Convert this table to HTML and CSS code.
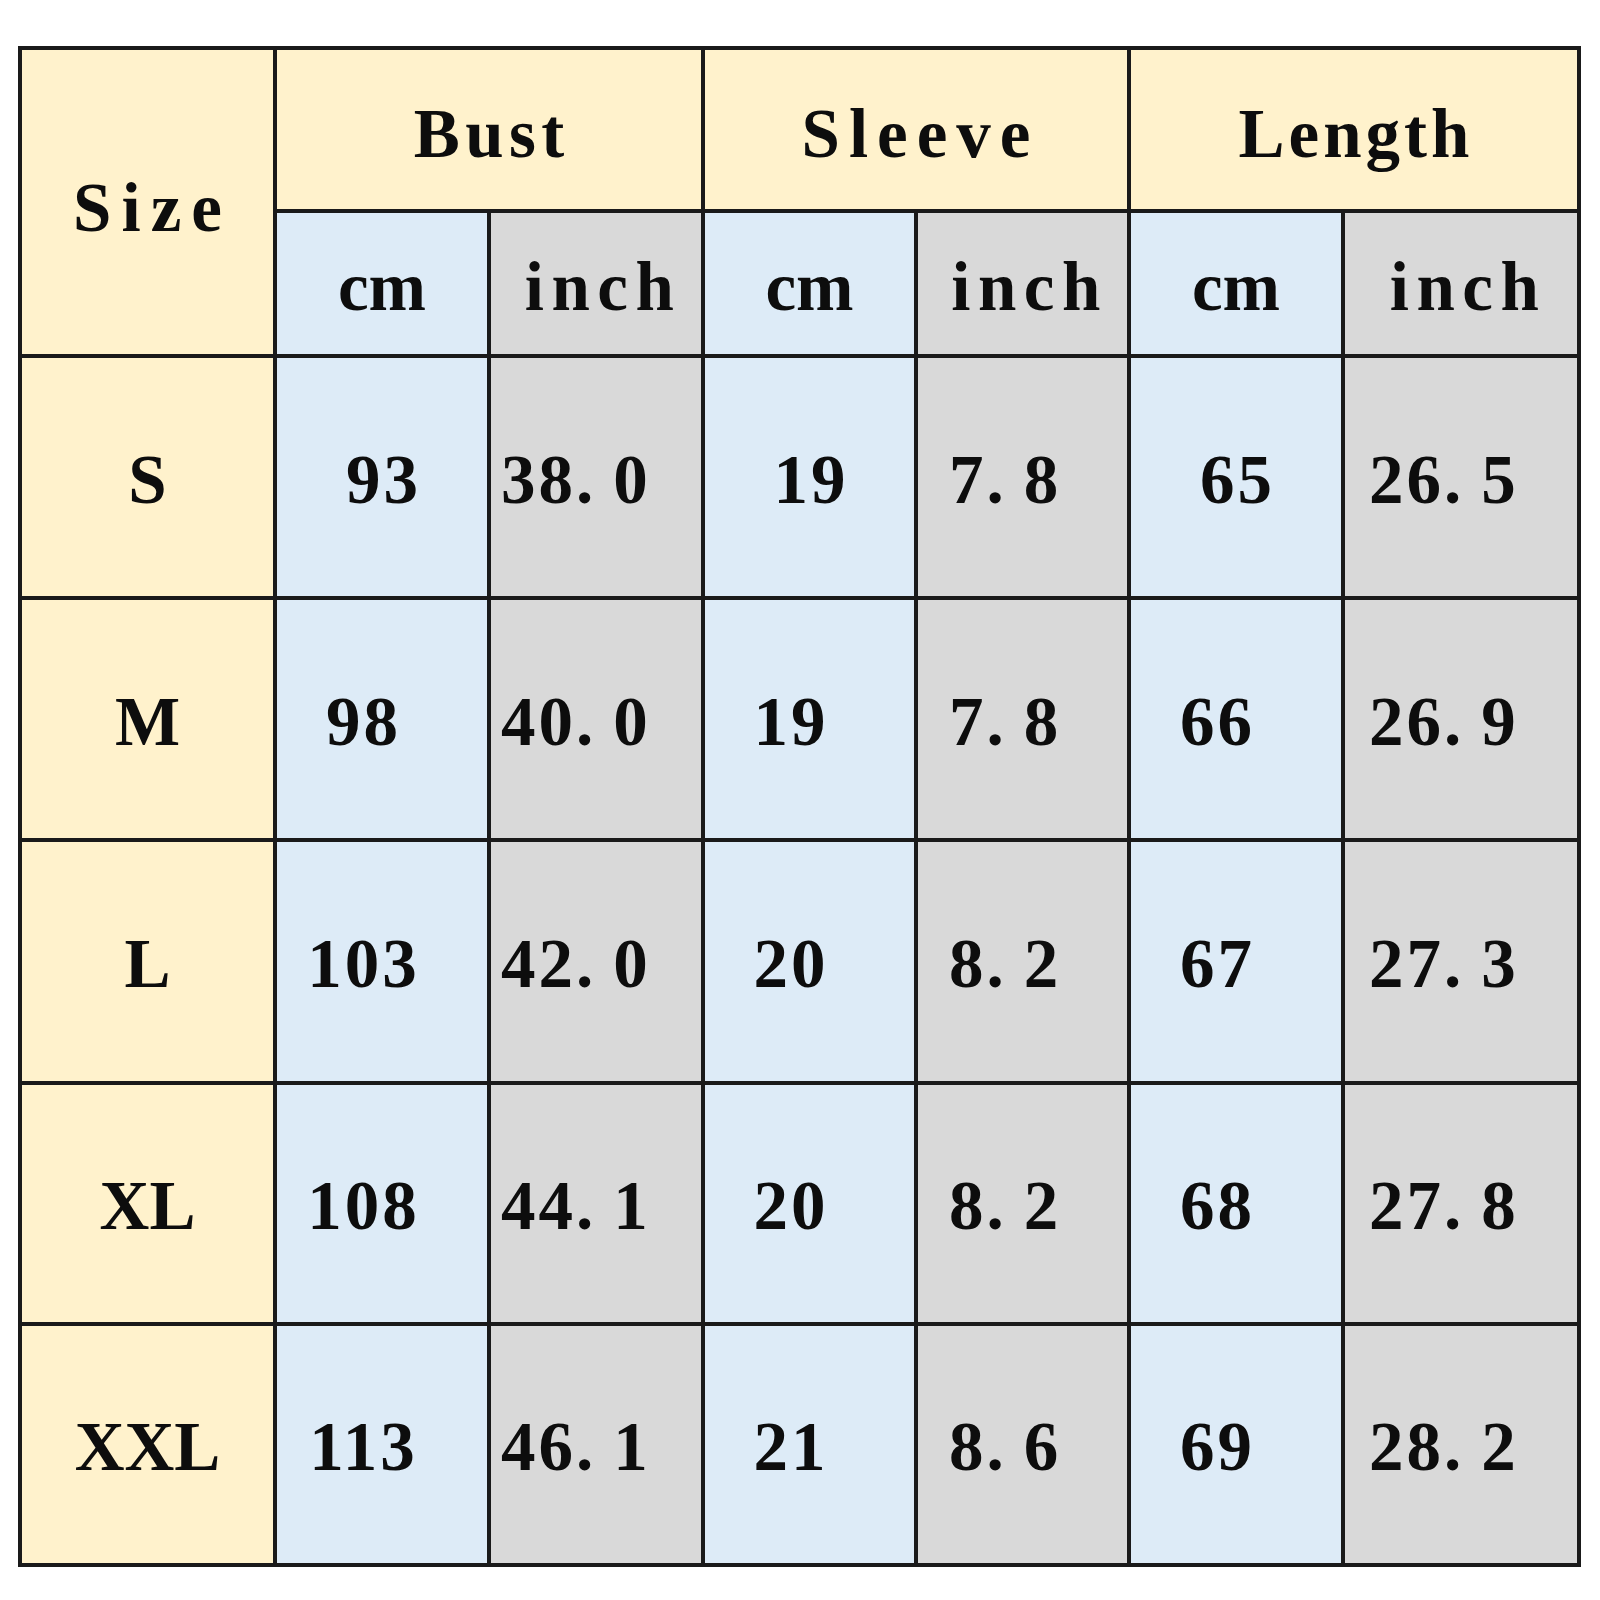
FILE: index.html
```html
<!DOCTYPE html>
<html>
<head>
<meta charset="utf-8">
<link rel="stylesheet" href="styles.css">
</head>
<body>
<div class="chart">
  <div class="cell y size-head">Size</div>
  <div class="cell y group g-bust">Bust</div>
  <div class="cell y group g-sleeve">Sleeve</div>
  <div class="cell y group g-length">Length</div>

  <div class="cell b unit unit-cm">cm</div>
  <div class="cell g unit unit-in">inch</div>
  <div class="cell b unit unit-cm">cm</div>
  <div class="cell g unit unit-in">inch</div>
  <div class="cell b unit unit-cm">cm</div>
  <div class="cell g unit unit-in">inch</div>

  <div class="cell y sz">S</div>
  <div class="cell b num">93</div>
  <div class="cell g num in1">38<span class="dot">.</span>0</div>
  <div class="cell b num">19</div>
  <div class="cell g num in2">7<span class="dot">.</span>8</div>
  <div class="cell b num">65</div>
  <div class="cell g num in3">26<span class="dot">.</span>5</div>

  <div class="cell y sz">M</div>
  <div class="cell b num sh">98</div>
  <div class="cell g num in1">40<span class="dot">.</span>0</div>
  <div class="cell b num sh">19</div>
  <div class="cell g num in2">7<span class="dot">.</span>8</div>
  <div class="cell b num sh">66</div>
  <div class="cell g num in3">26<span class="dot">.</span>9</div>

  <div class="cell y sz">L</div>
  <div class="cell b num sh">103</div>
  <div class="cell g num in1">42<span class="dot">.</span>0</div>
  <div class="cell b num sh">20</div>
  <div class="cell g num in2">8<span class="dot">.</span>2</div>
  <div class="cell b num sh">67</div>
  <div class="cell g num in3">27<span class="dot">.</span>3</div>

  <div class="cell y sz">XL</div>
  <div class="cell b num sh">108</div>
  <div class="cell g num in1">44<span class="dot">.</span>1</div>
  <div class="cell b num sh">20</div>
  <div class="cell g num in2">8<span class="dot">.</span>2</div>
  <div class="cell b num sh">68</div>
  <div class="cell g num in3">27<span class="dot">.</span>8</div>

  <div class="cell y sz">XXL</div>
  <div class="cell b num sh">113</div>
  <div class="cell g num in1">46<span class="dot">.</span>1</div>
  <div class="cell b num sh">21</div>
  <div class="cell g num in2">8<span class="dot">.</span>6</div>
  <div class="cell b num sh">69</div>
  <div class="cell g num in3">28<span class="dot">.</span>2</div>
</div>
</body>
</html>
```

FILE: styles.css
```css
html, body {
  margin: 0;
  padding: 0;
  background: #ffffff;
}

body {
  padding: 46px 0 0 18px;
}

.chart {
  display: grid;
  width: max-content;
  grid-template-columns: 251px 210px 210px 209px 209px 210px 232px;
  grid-template-rows: 159px 141px 238px 238px 239px 237px 237px;
  gap: 4px;
  padding: 4px;
  background: #1a1a1a;
  font-family: "Liberation Serif", "Times New Roman", serif;
  font-weight: bold;
  font-size: 69px;
  line-height: 1;
  color: #0d0d0d;
}

.cell {
  display: flex;
  align-items: center;
  justify-content: center;
  white-space: nowrap;
  overflow: hidden;
}

.y { background: #fff2cc; }
.b { background: #ddebf7; }
.g { background: #d9d9d9; }

/* header */
.size-head {
  grid-row: span 2;
  letter-spacing: 10px;
  padding: 12px 0 0 10px;
}

.group { grid-column: span 2; padding-top: 10px; }
.g-bust { letter-spacing: 5.5px; padding-left: 5.5px; }
.g-sleeve { letter-spacing: 9px; padding-left: 9px; }
.g-length { letter-spacing: 4px; padding-left: 4px; }

.unit { padding-top: 8px; }
.unit-in { letter-spacing: 7.5px; padding-left: 14px; }

/* data */
.sz { padding-top: 6px; }

.num { letter-spacing: 3px; padding-top: 6px; padding-left: 3px; }
.num.sh { padding-right: 40px; }

.num.in1, .num.in2, .num.in3 { justify-content: flex-start; }
.num.in1 { padding-left: 10px; }
.num.in2 { padding-left: 31px; }
.num.in3 { padding-left: 24px; }

.dot { margin-right: 17px; }
```
